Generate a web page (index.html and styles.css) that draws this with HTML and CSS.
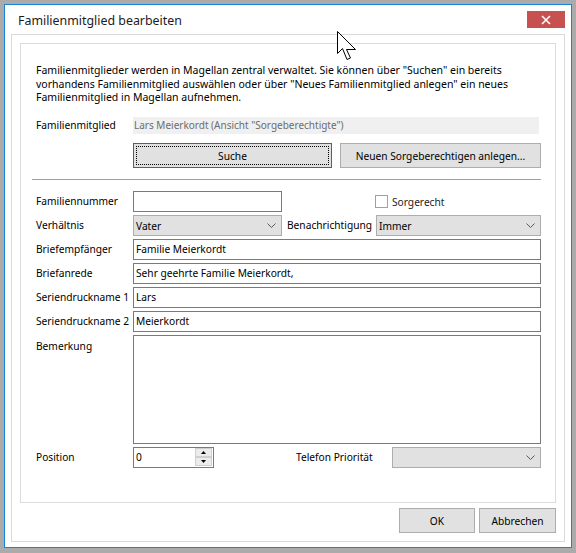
FILE: index.html
```html
<!DOCTYPE html>
<html lang="de">
<head>
    <meta charset="UTF-8">
    <title>Familienmitglied bearbeiten</title>
    <link rel="stylesheet" href="styles.css">
</head>
<body>
    <div class="window">
        <div class="titlebar">
            <span class="title">Familienmitglied bearbeiten</span>
            <button class="close">
                <svg width="10" height="10" viewBox="0 0 10 10"><path d="M1 1 L9 9 M9 1 L1 9" stroke="#fff" stroke-width="1.6"/></svg>
            </button>
        </div>

        <div class="client">
            <div class="group">
                <p class="intro">Familienmitglieder werden in Magellan zentral verwaltet. Sie können über "Suchen" ein bereits<br>vorhandens Familienmitglied auswählen oder über "Neues Familienmitglied anlegen" ein neues<br>Familienmitglied in Magellan aufnehmen.</p>

                <div class="member-row">
                    <span class="label">Familienmitglied</span>
                    <div class="member-field">Lars Meierkordt (Ansicht "Sorgeberechtigte")</div>
                </div>

                <div class="search-row">
                    <button class="btn search focused">Suche</button>
                    <button class="btn create">Neuen Sorgeberechtigen anlegen...</button>
                </div>

                <div class="separator"></div>

                <div class="form">
                    <span class="label">Familiennummer</span>
                    <div class="pair">
                        <div class="textbox"></div>
                        <span></span>
                        <div class="check"><span class="box"></span>Sorgerecht</div>
                    </div>

                    <span class="label">Verhältnis</span>
                    <div class="pair">
                        <div class="combo"><span>Vater</span><svg width="9" height="5" viewBox="0 0 9 5"><path d="M0.5 0.5 L4.5 4.5 L8.5 0.5" fill="none" stroke="#5a5a5a"/></svg></div>
                        <span class="label inner">Benachrichtigung</span>
                        <div class="combo"><span>Immer</span><svg width="9" height="5" viewBox="0 0 9 5"><path d="M0.5 0.5 L4.5 4.5 L8.5 0.5" fill="none" stroke="#5a5a5a"/></svg></div>
                    </div>

                    <span class="label">Briefempfänger</span>
                    <div class="textbox">Familie Meierkordt</div>

                    <span class="label">Briefanrede</span>
                    <div class="textbox">Sehr geehrte Familie Meierkordt,</div>

                    <span class="label">Seriendruckname 1</span>
                    <div class="textbox">Lars</div>

                    <span class="label">Seriendruckname 2</span>
                    <div class="textbox">Meierkordt</div>

                    <span class="label top">Bemerkung</span>
                    <div class="textbox memo"></div>

                    <span class="label">Position</span>
                    <div class="pair bottom">
                        <div class="spin">
                            <span class="spin-value">0</span>
                            <div class="spin-buttons">
                                <span class="spin-btn"><svg width="5" height="3" viewBox="0 0 5 3"><path d="M0 3 L2.5 0 L5 3 Z" fill="#000"/></svg></span>
                                <span class="spin-btn"><svg width="5" height="3" viewBox="0 0 5 3"><path d="M0 0 L5 0 L2.5 3 Z" fill="#000"/></svg></span>
                            </div>
                        </div>
                        <span class="label inner wide">Telefon Priorität</span>
                        <div class="combo"><span></span><svg width="9" height="5" viewBox="0 0 9 5"><path d="M0.5 0.5 L4.5 4.5 L8.5 0.5" fill="none" stroke="#5a5a5a"/></svg></div>
                    </div>
                </div>
            </div>

            <div class="footer">
                <button class="btn ok">OK</button>
                <button class="btn cancel">Abbrechen</button>
            </div>
        </div>
    </div>

    <svg class="cursor" width="21" height="31" viewBox="0 0 21 31">
        <path d="M0.5 0.5 V22.5 L5.5 17.5 L10 28.5 L13.5 27 L9.5 18.5 H18.5 Z" fill="#fff" stroke="#000" stroke-linejoin="miter"/>
    </svg>
</body>
</html>
```

FILE: styles.css
```css
body {
    margin: 0;
    padding: 4px;
    background-color: #ababab;
    font-family: 'Noto Sans', 'Open Sans', sans-serif;
    font-size: 10.2px;
    color: #000;
}
.window {
    height: 544px;
    box-sizing: border-box;
    border: 1px solid #1883d7;
    background: #fff;
    padding: 0 6px 5px;
    display: flex;
    flex-direction: column;
}
.titlebar {
    height: 29px;
    display: flex;
    justify-content: space-between;
    align-items: flex-start;
}
.title {
    font-size: 12.4px;
    line-height: 17px;
    margin: 7px 0 0 7px;
    color: #1b1b1b;
}
.close {
    width: 38px;
    height: 17px;
    margin-top: 6px;
    border: none;
    padding: 0;
    background-color: #c75050;
    display: flex;
    align-items: center;
    justify-content: center;
}
.client {
    flex: 1;
    border: 1px solid #dadada;
    padding: 8px 8px 0;
    display: flex;
    flex-direction: column;
}
.group {
    height: 460px;
    box-sizing: border-box;
    border: 1px solid #dcdcdc;
    padding: 0 14px 0 15px;
}
.intro {
    margin: 20px 0 0;
    font-size: 10.5px;
    line-height: 13.5px;
}
.label {
    line-height: 15px;
    white-space: nowrap;
}
.member-row {
    margin-top: 12.5px;
    display: grid;
    grid-template-columns: 97px 1fr;
    align-items: center;
}
.member-field {
    height: 17px;
    line-height: 17px;
    font-size: 10px;
    background-color: #f0f0f0;
    color: #6d6d6d;
    padding-left: 1px;
    margin-right: 2px;
}
.search-row {
    margin-top: 9px;
    padding-left: 97px;
    display: flex;
    gap: 8px;
}
.btn {
    height: 25px;
    background-color: #e1e1e1;
    border: 1px solid #adadad;
    font-family: inherit;
    font-size: inherit;
    color: #000;
    padding: 0;
}
.btn.search {
    width: 199px;
    position: relative;
}
.btn.create {
    width: 201px;
}
.btn.focused {
    border-color: #0078d7;
}
.btn.focused::after {
    content: '';
    position: absolute;
    inset: 2px;
    border: 1px dotted #000;
}
.separator {
    margin: 11px 0 0 -4px;
    width: 509px;
    height: 1px;
    background-color: #a0a0a0;
}
.form {
    margin-top: 11px;
    display: grid;
    grid-template-columns: 97px 408px;
    row-gap: 3px;
    align-items: center;
}
.label.top {
    align-self: start;
    padding-top: 4px;
}
.pair {
    display: grid;
    grid-template-columns: 149px 94px 165px;
    align-items: center;
}
.pair.bottom {
    grid-template-columns: 81px 178px 149px;
}
.label.inner {
    padding-left: 5px;
}
.label.inner.wide {
    padding-left: 82px;
}
.textbox {
    height: 21px;
    box-sizing: border-box;
    border: 1px solid #7a7a7a;
    padding: 0 2px;
    line-height: 19px;
    background: #fff;
}
.textbox.memo {
    height: 109px;
}
.combo {
    height: 21px;
    box-sizing: border-box;
    border: 1px solid #adadad;
    background-color: #e1e1e1;
    padding: 0 5px 0 2px;
    display: flex;
    align-items: center;
    justify-content: space-between;
}
.check {
    display: flex;
    align-items: center;
    gap: 4px;
    margin-left: -1px;
    color: #222;
}
.check .box {
    width: 13px;
    height: 13px;
    box-sizing: border-box;
    border: 1px solid #a0a0a0;
    background: #fff;
}
.spin {
    height: 21px;
    box-sizing: border-box;
    border: 1px solid #7a7a7a;
    display: flex;
    justify-content: space-between;
}
.spin-value {
    padding-left: 2px;
    line-height: 19px;
}
.spin-buttons {
    width: 17px;
    margin-right: 1px;
    display: flex;
    flex-direction: column;
}
.spin-btn {
    height: 9px;
    box-sizing: border-box;
    border: 1px solid #cfcfcf;
    background-color: #ececec;
    display: flex;
    align-items: center;
    justify-content: center;
}
.footer {
    margin-top: 5px;
    display: flex;
    justify-content: flex-end;
    gap: 4px;
}
.btn.ok {
    width: 76px;
}
.btn.cancel {
    width: 77px;
}
.cursor {
    position: absolute;
    left: 337px;
    top: 31px;
}
```
